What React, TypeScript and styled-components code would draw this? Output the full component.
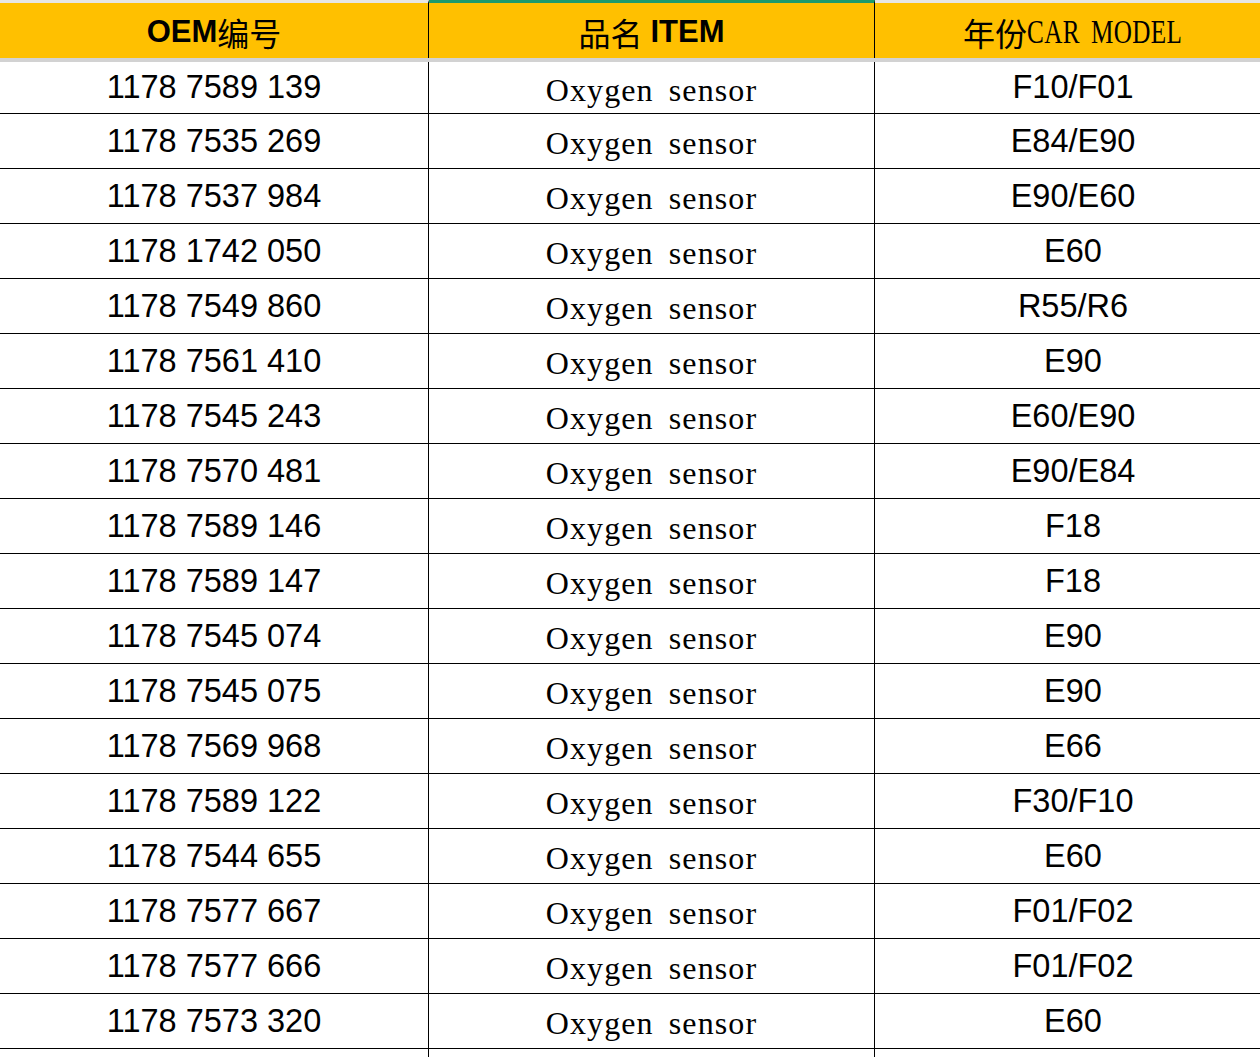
import styled, { createGlobalStyle } from 'styled-components';

const GlobalStyle = createGlobalStyle`
  html, body {
    margin: 0;
    padding: 0;
    background: #ffffff;
    overflow: hidden;
  }
`;

const COLUMNS = '429px 446px 396px';

const Sheet = styled.div`
  width: 1271px;
  display: flex;
  flex-direction: column;
`;

const HeaderRow = styled.div`
  display: grid;
  grid-template-columns: ${COLUMNS};
  border-bottom: 4px solid #d2d2d2;
`;

const HeaderCell = styled.div<{ $selected?: boolean; $last?: boolean }>`
  box-sizing: border-box;
  height: 58px;
  background: #ffc000;
  border-top: 3px solid ${({ $selected }) => ($selected ? '#1d9a6c' : '#e6e6e6')};
  border-right: ${({ $last }) => ($last ? 'none' : '1px solid #000')};
  display: flex;
  align-items: center;
  justify-content: center;
  color: #000;
  font-size: 31px;
  padding-top: 2px;
`;

const BoldLatin = styled.span`
  font-family: 'Liberation Sans', Arial, sans-serif;
  font-weight: bold;
`;

const CjkText = styled.span<{ $gap?: boolean }>`
  font-family: 'Noto Sans CJK SC', sans-serif;
  font-weight: 400;
  font-size: 32px;
  margin-right: ${({ $gap }) => ($gap ? '8px' : '0')};
`;

const SerifCaps = styled.span`
  display: inline-block;
  font-family: 'Liberation Serif', 'Times New Roman', serif;
  font-size: 34px;
  letter-spacing: 0.5px;
  word-spacing: 6px;
  transform: scaleX(0.74);
  transform-origin: left center;
  margin-right: -54px;
`;

const Row = styled.div<{ $height: number }>`
  display: grid;
  grid-template-columns: ${COLUMNS};
  height: ${({ $height }) => $height}px;
  box-sizing: border-box;
  border-bottom: 1px solid #000;
`;

const Cell = styled.div<{ $kind: 'sans' | 'serif'; $last?: boolean }>`
  box-sizing: border-box;
  display: flex;
  align-items: center;
  justify-content: center;
  border-right: ${({ $last }) => ($last ? 'none' : '1px solid #000')};
  color: #000;
  font-family: ${({ $kind }) =>
    $kind === 'sans'
      ? "'Liberation Sans', Arial, sans-serif"
      : "'Liberation Serif', 'Times New Roman', serif"};
  font-size: ${({ $kind }) => ($kind === 'serif' ? '32px' : '32.5px')};
  letter-spacing: ${({ $kind }) => ($kind === 'serif' ? '1.1px' : '0')};
  word-spacing: ${({ $kind }) => ($kind === 'serif' ? '6px' : '0')};
  padding-top: ${({ $kind }) => ($kind === 'serif' ? '5px' : '0')};
  white-space: nowrap;
`;

const rows: [string, string][] = [
  ['1178 7589 139', 'F10/F01'],
  ['1178 7535 269', 'E84/E90'],
  ['1178 7537 984', 'E90/E60'],
  ['1178 1742 050', 'E60'],
  ['1178 7549 860', 'R55/R6'],
  ['1178 7561 410', 'E90'],
  ['1178 7545 243', 'E60/E90'],
  ['1178 7570 481', 'E90/E84'],
  ['1178 7589 146', 'F18'],
  ['1178 7589 147', 'F18'],
  ['1178 7545 074', 'E90'],
  ['1178 7545 075', 'E90'],
  ['1178 7569 968', 'E66'],
  ['1178 7589 122', 'F30/F10'],
  ['1178 7544 655', 'E60'],
  ['1178 7577 667', 'F01/F02'],
  ['1178 7577 666', 'F01/F02'],
  ['1178 7573 320', 'E60'],
];

const App = () => {
  return (
    <>
      <GlobalStyle />
      <Sheet>
        <HeaderRow>
          <HeaderCell>
            <BoldLatin>OEM</BoldLatin>
            <CjkText>编号</CjkText>
          </HeaderCell>
          <HeaderCell $selected>
            <CjkText $gap>品名</CjkText>
            <BoldLatin>ITEM</BoldLatin>
          </HeaderCell>
          <HeaderCell $last>
            <CjkText>年份</CjkText>
            <SerifCaps>CAR MODEL</SerifCaps>
          </HeaderCell>
        </HeaderRow>
        {rows.map(([oem, model], i) => (
          <Row key={oem + i} $height={i === 0 ? 52 : 55}>
            <Cell $kind="sans">{oem}</Cell>
            <Cell $kind="serif">Oxygen sensor</Cell>
            <Cell $kind="sans" $last>
              {model}
            </Cell>
          </Row>
        ))}
        <Row $height={55}>
          <Cell $kind="sans" />
          <Cell $kind="serif" />
          <Cell $kind="sans" $last />
        </Row>
      </Sheet>
    </>
  );
};

export default App;
